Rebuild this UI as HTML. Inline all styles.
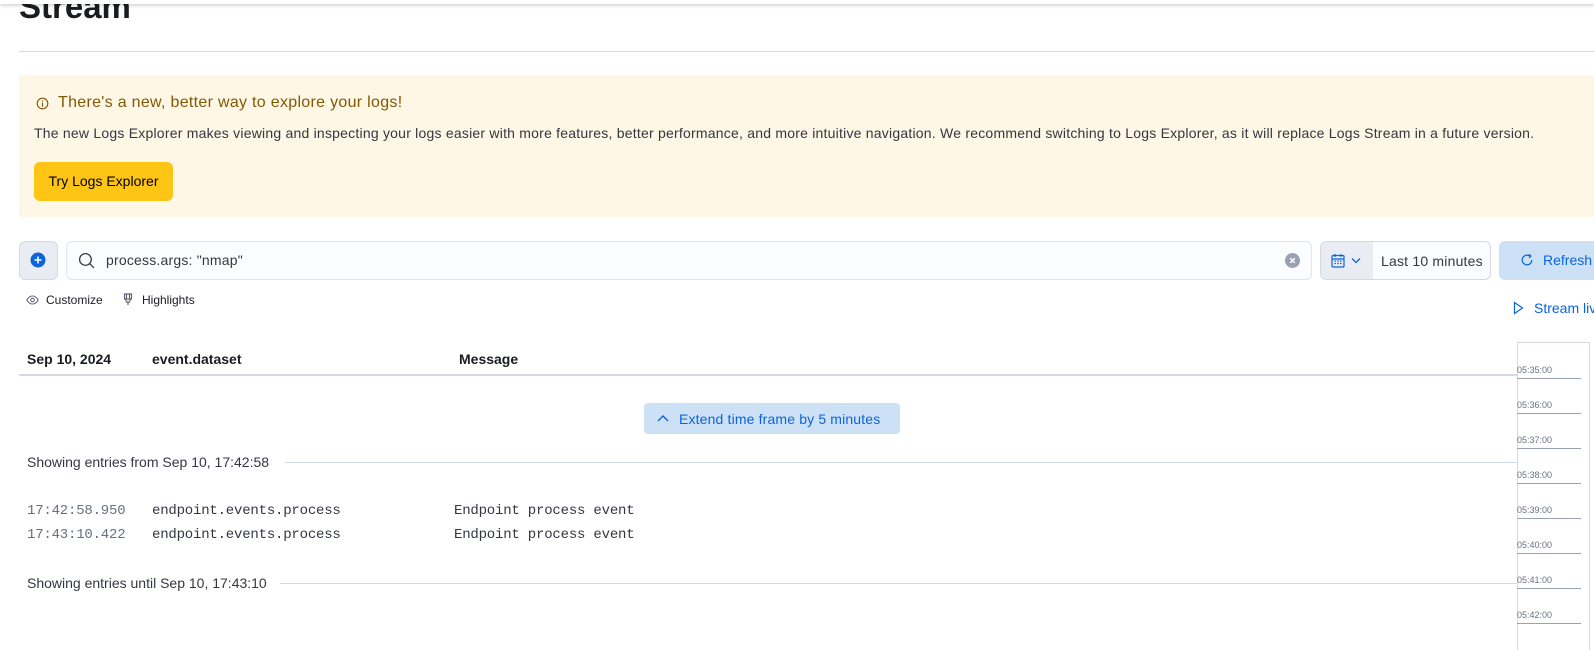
<!DOCTYPE html>
<html><head><meta charset="utf-8"><style>
*{box-sizing:border-box;margin:0;padding:0}
html,body{width:100%;height:650px;overflow:hidden}
body{background:#fff;font-family:"Liberation Sans",sans-serif;color:#343741;position:relative}
.a{position:absolute;white-space:nowrap}
.mono{font-family:"Liberation Mono",monospace;font-size:14px;letter-spacing:-0.2px}
</style></head><body>
<div class="a" style="left:0;top:0;right:0;height:4px;background:#fff;box-shadow:0 1px 4px rgba(0,0,0,.25);z-index:2"></div>
<div class="a" style="left:0;top:0;width:300px;height:30px;overflow:hidden"><div class="a" style="left:19px;top:-12px;font-size:33px;font-weight:bold;color:#1a1c21">Stream</div></div>
<div class="a" style="left:19px;top:51px;right:0;height:1px;background:#d3dae6"></div>

<div class="a" style="left:19px;top:75px;right:0;height:142px;background:#fef7e6"></div>
<svg class="a" style="left:36px;top:97px" width="13" height="13" viewBox="0 0 16 16"><circle cx="8" cy="8" r="6.5" fill="none" stroke="#825803" stroke-width="1.4"/><rect x="7.3" y="7" width="1.4" height="5" fill="#825803"/><rect x="7.3" y="4.2" width="1.4" height="1.4" fill="#825803"/></svg>
<div class="a" style="left:58px;top:94px;font-size:16px;color:#825803;letter-spacing:0.3px">There's a new, better way to explore your logs!</div>
<div class="a" style="left:34px;top:125px;font-size:14px;letter-spacing:0.22px">The new Logs Explorer makes viewing and inspecting your logs easier with more features, better performance, and more intuitive navigation. We recommend switching to Logs Explorer, as it will replace Logs Stream in a future version.</div>
<div class="a" style="left:34px;top:162px;width:139px;height:39px;background:#fec514;border-radius:6px;font-size:14px;color:#000;text-align:center;line-height:39px">Try Logs Explorer</div>

<div class="a" style="left:19px;top:241px;width:39px;height:39px;background:#e9edf3;border:1px solid #d3dae6;border-radius:6px"></div>
<svg class="a" style="left:30px;top:252px" width="16" height="16" viewBox="0 0 16 16"><circle cx="8" cy="8" r="7.5" fill="#0b64dd"/><path d="M8 4.5v7M4.5 8h7" stroke="#fff" stroke-width="1.6"/></svg>
<div class="a" style="left:66px;top:241px;width:1246px;height:39px;background:#fbfcfd;border:1px solid #e0e5ee;border-radius:6px"></div>
<svg class="a" style="left:78px;top:252px" width="17" height="17" viewBox="0 0 16 16"><circle cx="7" cy="7" r="5.5" fill="none" stroke="#343741" stroke-width="1.2"/><path d="M11 11l4 4" stroke="#343741" stroke-width="1.2"/></svg>
<div class="a" style="left:106px;top:252px;font-size:14px;color:#343741;letter-spacing:0.2px">process.args: "nmap"</div>
<svg class="a" style="left:1285px;top:253px" width="15" height="15" viewBox="0 0 16 16"><circle cx="8" cy="8" r="8" fill="#98a2b3"/><path d="M5.5 5.5l5 5M10.5 5.5l-5 5" stroke="#fff" stroke-width="1.5"/></svg>

<div class="a" style="left:1320px;top:241px;width:171px;height:39px;background:#fbfcfd;border:1px solid #d3dae6;border-radius:6px;overflow:hidden"><div style="width:52px;height:100%;background:#e9edf3"></div></div>
<svg class="a" style="left:1331px;top:253px" width="14" height="15" viewBox="0 0 14 15"><rect x="1" y="2.5" width="12" height="11.5" rx="1" fill="none" stroke="#0b64dd" stroke-width="1.2"/><path d="M1 6h12M4 1v3M10 1v3" stroke="#0b64dd" stroke-width="1.2"/><path d="M3.5 8h1.5M6.3 8h1.5M9 8h1.5M3.5 10.5h1.5M6.3 10.5h1.5M9 10.5h1.5" stroke="#0b64dd" stroke-width="1.2"/></svg>
<svg class="a" style="left:1351px;top:257px" width="10" height="7" viewBox="0 0 10 7"><path d="M1 1.5l4 4 4-4" fill="none" stroke="#0b64dd" stroke-width="1.3"/></svg>
<div class="a" style="left:1381px;top:253px;font-size:14px;color:#343741;letter-spacing:0.2px">Last 10 minutes</div>
<div class="a" style="left:1499px;top:241px;width:95px;height:39px;background:#cce1f5;border-radius:6px 0 0 6px;overflow:hidden">
<svg class="a" style="left:21px;top:12px" width="14" height="14" viewBox="0 0 16 16"><path d="M13.5 8A5.5 5.5 0 1 1 11 3.4" fill="none" stroke="#0b64dd" stroke-width="1.4"/><path d="M10 1.5l2.5 2-2.3 2" fill="none" stroke="#0b64dd" stroke-width="1.4"/></svg>
<div class="a" style="left:44px;top:11px;font-size:14px;color:#0b64dd">Refresh</div>
</div>

<svg class="a" style="left:26px;top:295px" width="13" height="10" viewBox="0 0 16 12"><path d="M1 6C3 2.5 5.5 1 8 1s5 1.5 7 5c-2 3.5-4.5 5-7 5S3 9.5 1 6z" fill="none" stroke="#535966" stroke-width="1.2"/><circle cx="8" cy="6" r="2.2" fill="none" stroke="#535966" stroke-width="1.2"/></svg>
<div class="a" style="left:46px;top:293px;font-size:12px;color:#1a1c21">Customize</div>
<svg class="a" style="left:123px;top:293px" width="10" height="13" viewBox="0 0 10 13"><rect x="1.5" y="1" width="7" height="5" fill="none" stroke="#535966" stroke-width="1.1"/><path d="M3.5 1v5M6.5 1v5M2.5 6l1 3h3l1-3M5 9v3" fill="none" stroke="#535966" stroke-width="1.1"/></svg>
<div class="a" style="left:142px;top:293px;font-size:12px;color:#1a1c21">Highlights</div>
<div class="a" style="left:1510px;top:298px;width:84px;height:22px;overflow:hidden">
<svg class="a" style="left:3px;top:3px" width="11" height="14" viewBox="0 0 11 14"><path d="M1.5 1.5v11l8-5.5z" fill="none" stroke="#0b64dd" stroke-width="1.2"/></svg>
<div class="a" style="left:24px;top:2px;font-size:14px;color:#0b64dd">Stream live</div>
</div>

<div class="a" style="left:27px;top:351px;font-size:14px;font-weight:bold;color:#1a1c21">Sep 10, 2024</div>
<div class="a" style="left:152px;top:351px;font-size:14px;font-weight:bold;color:#1a1c21">event.dataset</div>
<div class="a" style="left:459px;top:351px;font-size:14px;font-weight:bold;color:#1a1c21">Message</div>
<div class="a" style="left:19px;top:374px;width:1498px;height:2px;background:#d3dae6"></div>

<div class="a" style="left:644px;top:403px;width:256px;height:31px;background:#cce1f5;border-radius:4px"></div>
<svg class="a" style="left:657px;top:414px" width="12" height="8" viewBox="0 0 12 8"><path d="M1 7l5-5 5 5" fill="none" stroke="#0b64dd" stroke-width="1.4"/></svg>
<div class="a" style="left:679px;top:411px;font-size:14px;color:#0b64dd;letter-spacing:0.15px">Extend time frame by 5 minutes</div>

<div class="a" style="left:27px;top:454px;font-size:14px;color:#343741">Showing entries from Sep 10, 17:42:58</div>
<div class="a" style="left:285px;top:462px;width:1232px;height:1px;background:#d3dae6"></div>
<div class="a mono" style="left:27px;top:503px;color:#69707d">17:42:58.950</div>
<div class="a mono" style="left:152px;top:503px">endpoint.events.process</div>
<div class="a mono" style="left:454px;top:503px">Endpoint process event</div>
<div class="a mono" style="left:27px;top:527px;color:#69707d">17:43:10.422</div>
<div class="a mono" style="left:152px;top:527px">endpoint.events.process</div>
<div class="a mono" style="left:454px;top:527px">Endpoint process event</div>
<div class="a" style="left:27px;top:575px;font-size:14px;color:#343741">Showing entries until Sep 10, 17:43:10</div>
<div class="a" style="left:280px;top:583px;width:1237px;height:1px;background:#d3dae6"></div>

<div class="a" style="left:1517px;top:342px;width:1px;height:308px;background:#d3dae6"></div>
<div class="a" style="left:1589px;top:342px;width:1px;height:308px;background:#d3dae6"></div>
<div class="a" style="left:1517px;top:342px;width:73px;height:1px;background:#d3dae6"></div>
<div class="a" style="left:1517px;top:363px;width:64px;height:280px;overflow:hidden;font-size:9px;color:#69707d;line-height:14px">
<div style="height:16px;border-bottom:1px solid #98a2b3;margin-bottom:19px">05:35:00</div>
<div style="height:16px;border-bottom:1px solid #98a2b3;margin-bottom:19px">05:36:00</div>
<div style="height:16px;border-bottom:1px solid #98a2b3;margin-bottom:19px">05:37:00</div>
<div style="height:16px;border-bottom:1px solid #98a2b3;margin-bottom:19px">05:38:00</div>
<div style="height:16px;border-bottom:1px solid #98a2b3;margin-bottom:19px">05:39:00</div>
<div style="height:16px;border-bottom:1px solid #98a2b3;margin-bottom:19px">05:40:00</div>
<div style="height:16px;border-bottom:1px solid #98a2b3;margin-bottom:19px">05:41:00</div>
<div style="height:16px;border-bottom:1px solid #98a2b3;margin-bottom:0">05:42:00</div>
</div>
</body></html>
